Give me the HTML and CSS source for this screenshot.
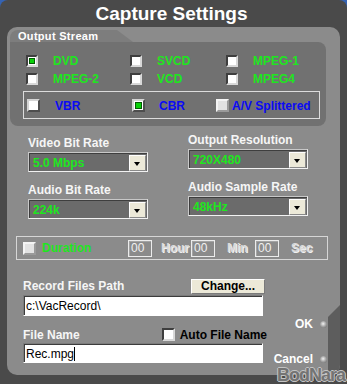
FILE: index.html
```html
<!DOCTYPE html>
<html>
<head>
<meta charset="utf-8">
<title>Capture Settings</title>
<link rel="stylesheet" href="styles.css">
</head>
<body>
<div class="window">
  <div class="titlebar">Capture Settings</div>
  <div class="panel">
    <div class="group">
      <div class="group-tab">Output Stream</div>
      <div class="group-body">
        <div class="formats">
          <div class="opt"><span class="cb checked"></span><span class="green">DVD</span></div>
          <div class="opt"><span class="cb"></span><span class="green">SVCD</span></div>
          <div class="opt"><span class="cb"></span><span class="green">MPEG-1</span></div>
          <div class="opt"><span class="cb"></span><span class="green">MPEG-2</span></div>
          <div class="opt"><span class="cb"></span><span class="green">VCD</span></div>
          <div class="opt"><span class="cb"></span><span class="green">MPEG4</span></div>
        </div>
        <div class="rates">
          <div class="opt opt-rate"><span class="cb cb-raised"></span><span class="blue">VBR</span></div>
          <div class="opt opt-rate2"><span class="cb cb-raised checked"></span><span class="blue">CBR</span></div>
          <div class="opt opt-tight"><span class="cb cb-disabled"></span><span class="blue">A/V Splittered</span></div>
        </div>
      </div>
    </div>

    <div class="combos">
      <div class="col col-left">
        <div class="field-label">Video Bit Rate</div>
        <div class="combo"><span class="combo-value">5.0 Mbps</span><span class="drop"></span></div>
        <div class="field-label spaced">Audio Bit Rate</div>
        <div class="combo"><span class="combo-value">224k</span><span class="drop"></span></div>
      </div>
      <div class="col col-right">
        <div class="field-label">Output Resolution</div>
        <div class="combo"><span class="combo-value">720X480</span><span class="drop"></span></div>
        <div class="field-label spaced">Audio Sample Rate</div>
        <div class="combo"><span class="combo-value">48kHz</span><span class="drop"></span></div>
      </div>
    </div>

    <div class="duration">
      <span class="cb cb-disabled cb13"></span>
      <span class="green dur-label">Duration</span>
      <span class="time-input">00</span>
      <span class="unit unit-hour">Hour</span>
      <span class="time-input">00</span>
      <span class="unit unit-min">Min</span>
      <span class="time-input">00</span>
      <span class="unit unit-sec">Sec</span>
    </div>

    <div class="bottom">
      <div class="files">
        <div class="path-row">
          <span class="field-label">Record Files Path</span>
          <span class="button">Change...</span>
        </div>
        <div class="text-input">c:\VacRecord\</div>
        <div class="name-row">
          <span class="field-label">File Name</span>
          <span class="auto"><span class="cb cb13"></span><span class="auto-text">Auto File Name</span></span>
        </div>
        <div class="text-input input-short">Rec.mpg<span class="caret"></span></div>
      </div>
      <div class="actions">
        <div class="action action-ok"><span>OK</span><span class="bullet"></span></div>
        <div class="action action-cancel"><span>Cancel</span><span class="bullet"></span></div>
      </div>
    </div>
  </div>
  <div class="watermark">BodNara</div>
</div>
</body>
</html>
```
FILE: styles.css
```css
html, body {
  margin: 0;
  padding: 0;
  background: #3563b3;
}

.window {
  position: relative;
  width: 347px;
  height: 384px;
  background: #4a4a4a;
  border-radius: 8px 8px 0 0;
  overflow: hidden;
  font-family: "Liberation Sans", Arial, sans-serif;
}

.titlebar {
  height: 27px;
  box-sizing: border-box;
  padding: 3px 4px 0 0;
  text-align: center;
  font-size: 19px;
  line-height: 21px;
  font-weight: bold;
  color: #ffffff;
}

.panel {
  position: relative;
  margin: 0 7px;
  height: 348px;
  box-sizing: border-box;
  padding-top: 3px;
  background: #8b8b8b;
  border-radius: 10px;
}

.panel::after {
  content: "";
  position: absolute;
  right: 0;
  top: 278px;
  bottom: 0;
  width: 12px;
  background: #5d5d5d;
  clip-path: polygon(0 12px, 100% 0, 100% 100%, 0 100%);
  border-bottom-right-radius: 10px;
}

/* Output Stream group */
.group {
  margin: 0 14px 0 3px;
}

.group-tab {
  width: 123px;
  height: 12px;
  box-sizing: border-box;
  padding: 1px 0 0 8px;
  background: #7d7d7d;
  border-top-left-radius: 8px;
  clip-path: polygon(0 0, 107px 0, 123px 100%, 0 100%);
  font-size: 11px;
  line-height: 11px;
  font-weight: bold;
  letter-spacing: 0.3px;
  color: #ffffff;
  white-space: nowrap;
}

.group-body {
  background: #717171;
  border-radius: 0 8px 8px 8px;
  padding: 10px 6px 7px 13px;
}

.formats {
  display: grid;
  grid-template-columns: 104px 96px 1fr;
  grid-auto-rows: 18px;
  margin-left: 3px;
}

.opt {
  display: flex;
  align-items: center;
  gap: 15px;
}

.green {
  color: #1ee61e;
  font-size: 12px;
  line-height: 14px;
  font-weight: bold;
}

.blue {
  color: #0a0af5;
  font-size: 12px;
  line-height: 14px;
  font-weight: bold;
}

.cb {
  position: relative;
  flex: none;
  width: 12px;
  height: 12px;
  box-sizing: border-box;
  background: #ffffff;
  border: 2px solid;
  border-color: #3e3e3e #d8d8d8 #d8d8d8 #3e3e3e;
}

.cb.checked::after {
  content: "";
  position: absolute;
  inset: 1px;
  background: #0ad20a;
  border: 1px solid #055a05;
}

.cb13 {
  width: 13px;
  height: 13px;
}

.cb-raised {
  width: 13px;
  height: 13px;
  border-color: #d4d4d4 #4e4e4e #4e4e4e #d4d4d4;
}

.cb-disabled {
  width: 13px;
  height: 13px;
  background: #e2e2e2;
  border-color: #f4f4f4 #9a9a9a #9a9a9a #f4f4f4;
}

.rates {
  margin-top: 3px;
  height: 28px;
  box-sizing: border-box;
  border: 1px solid #dcdcdc;
  padding: 1px 0 0 3px;
  display: grid;
  grid-template-columns: 105px 84px 1fr;
  align-items: center;
}

.opt-rate2 {
  gap: 14px;
}

.opt-tight {
  gap: 3px;
}

/* Combos */
.combos {
  display: grid;
  grid-template-columns: 160px 1fr;
  padding-left: 21px;
  margin-top: 7px;
}

.col-left {
  padding-top: 3px;
}

.field-label {
  display: block;
  color: #f6f6f6;
  font-size: 12px;
  line-height: 14px;
  font-weight: bold;
  margin-bottom: 2px;
  white-space: nowrap;
}

.field-label.spaced {
  margin-top: 11px;
}

.combo {
  width: 120px;
  height: 20px;
  box-sizing: border-box;
  border: 1px solid;
  border-color: #c8c8c8 #f2f2f2 #f2f2f2 #c8c8c8;
  box-shadow: inset 1px 1px 0 #3e3e3e;
  background: #6b6b6b;
  display: flex;
  align-items: center;
  justify-content: space-between;
  padding: 1px 1px 0 4px;
}

.combo-value {
  color: #1ee61e;
  font-size: 12px;
  line-height: 14px;
  font-weight: bold;
}

.drop {
  position: relative;
  width: 17px;
  height: 16px;
  box-sizing: border-box;
  background: #ece9d8;
  border: 1px solid;
  border-color: #ffffff #8a8a8a #8a8a8a #ffffff;
}

.drop::after {
  content: "";
  position: absolute;
  left: 4px;
  top: 6px;
  border-left: 3.5px solid transparent;
  border-right: 3.5px solid transparent;
  border-top: 4px solid #000000;
}

/* Duration */
.duration {
  margin: 17px 12px 0 9px;
  height: 24px;
  box-sizing: border-box;
  border: 1px solid #d6d6d6;
  display: flex;
  align-items: center;
  padding-left: 6px;
}

.dur-label {
  width: 86px;
  margin-left: 6px;
}

.time-input {
  flex: none;
  width: 24px;
  height: 17px;
  box-sizing: border-box;
  border: 1px solid #ececec;
  box-shadow: inset 1px 1px 0 #a4a4a4;
  color: #f0f0f0;
  font-size: 12px;
  line-height: 15px;
  padding-left: 2px;
}

.unit {
  box-sizing: border-box;
  color: #dadada;
  text-shadow: 1px 1px 0 #f2f2f2;
  font-size: 12px;
  line-height: 14px;
  font-weight: bold;
}

.unit-hour {
  width: 39px;
  padding-left: 9px;
}

.unit-min {
  width: 40px;
  padding-left: 12px;
}

.unit-sec {
  padding-left: 12px;
}

/* Bottom */
.bottom {
  display: flex;
  margin-top: 19px;
  padding-left: 16px;
}

.files {
  width: 242px;
}

.path-row {
  display: flex;
  justify-content: space-between;
  align-items: flex-start;
  height: 16px;
}

.button {
  width: 74px;
  height: 15px;
  box-sizing: border-box;
  background: #ece9d8;
  border: 1px solid;
  border-color: #ffffff #7a7a7a #7a7a7a #ffffff;
  text-align: center;
  font-size: 12px;
  line-height: 13px;
  font-weight: bold;
  color: #000000;
}

.text-input {
  width: 240px;
  height: 21px;
  box-sizing: border-box;
  background: #ffffff;
  border: 1px solid;
  border-color: #7c7c7c #ffffff #ffffff #7c7c7c;
  box-shadow: inset 1px 1px 0 #3c3c3c;
  padding: 2px 0 0 2px;
  font-size: 12px;
  line-height: 16px;
  color: #000000;
}

.input-short {
  height: 20px;
  margin-top: 1px;
}

.caret {
  display: inline-block;
  width: 1px;
  height: 14px;
  background: #000000;
  vertical-align: -3px;
}

.name-row {
  margin-top: 11px;
  height: 15px;
  display: flex;
  justify-content: space-between;
  align-items: center;
}

.name-row .field-label {
  margin-bottom: 0;
}

.auto {
  display: flex;
  align-items: center;
  gap: 5px;
  margin-right: -2px;
}

.auto-text {
  color: #000000;
  font-size: 12px;
  line-height: 14px;
  font-weight: bold;
}

.actions {
  flex: 1;
  display: flex;
  flex-direction: column;
  align-items: flex-end;
  padding-right: 13px;
}

.action {
  display: flex;
  align-items: center;
  gap: 7px;
  color: #ffffff;
  font-size: 12px;
  line-height: 14px;
  font-weight: bold;
}

.action-ok {
  margin-top: 38px;
}

.action-cancel {
  margin-top: 21px;
}

.bullet {
  width: 7px;
  height: 7px;
  border-radius: 50%;
  background: radial-gradient(circle at 45% 40%, #f2f2f2 0, #a8a8a8 45%, #5e5e5e 100%);
}

.watermark {
  position: absolute;
  right: 2px;
  bottom: 0;
  font-size: 18px;
  line-height: 18px;
  font-weight: bold;
  letter-spacing: -1px;
  color: #747474;
  text-shadow: 1px 0 0 #c4c4c4, -1px 0 0 #c4c4c4, 0 1px 0 #c4c4c4, 0 -1px 0 #c4c4c4;
}
```
